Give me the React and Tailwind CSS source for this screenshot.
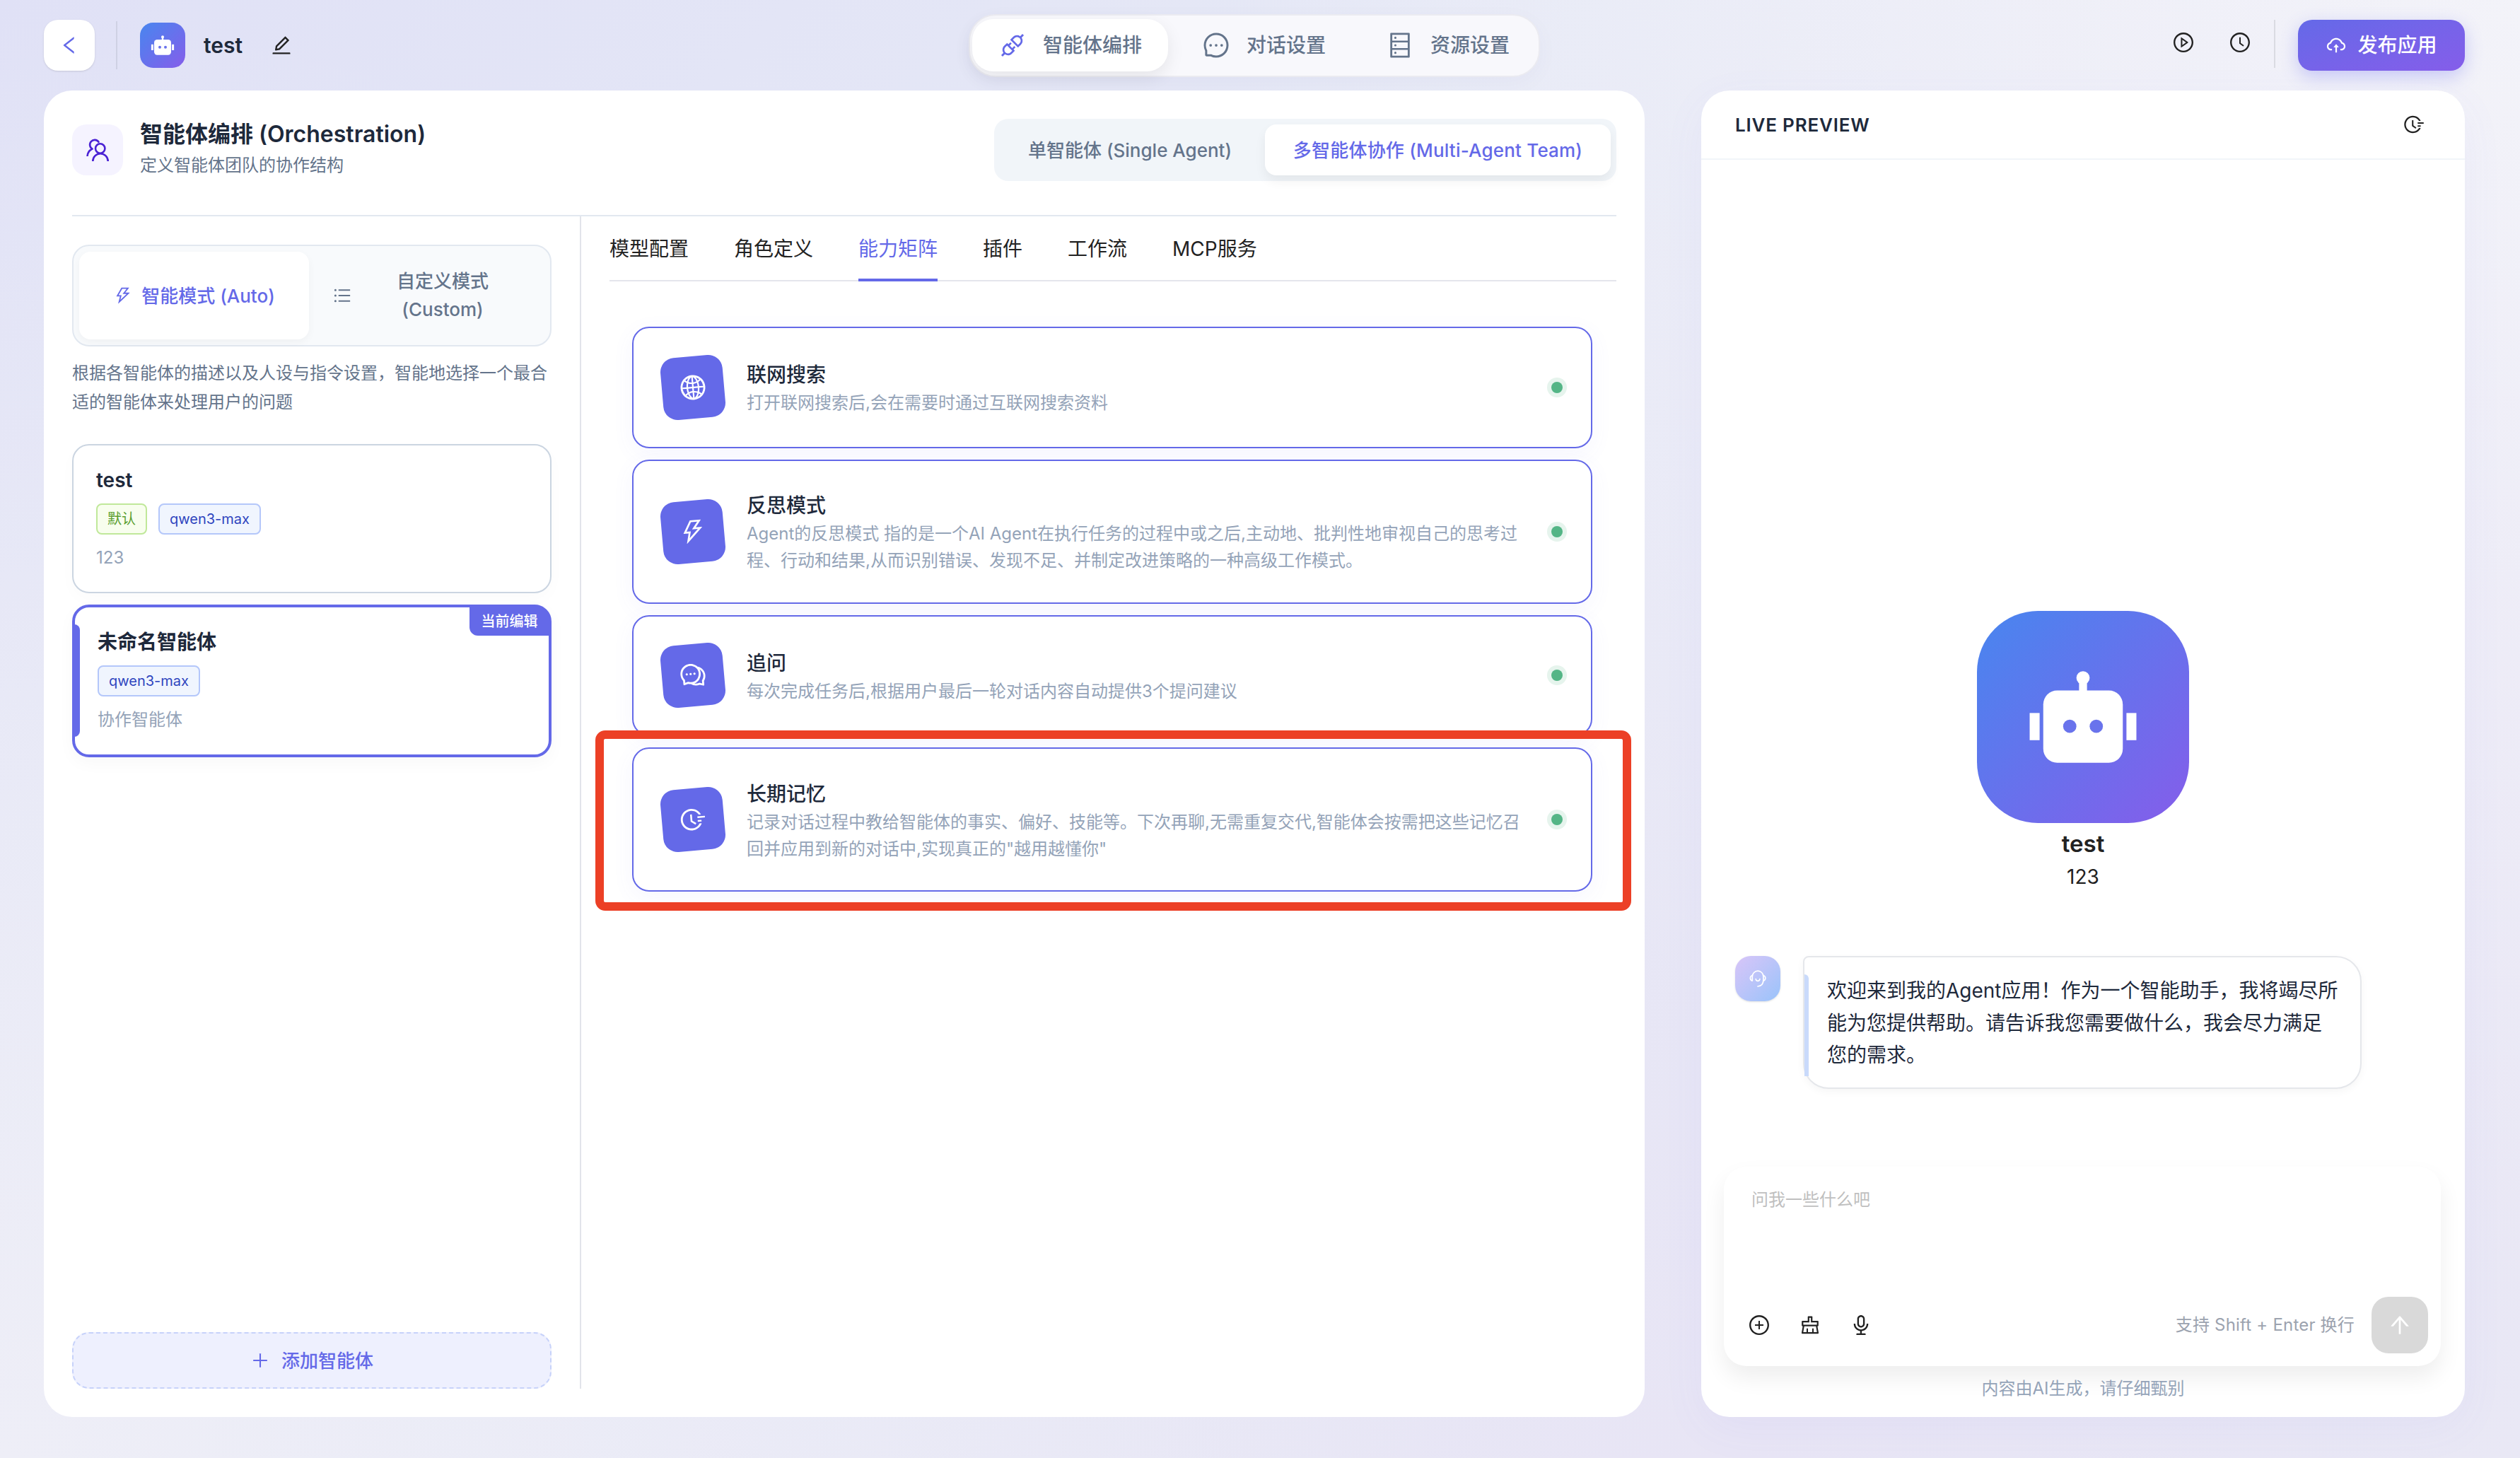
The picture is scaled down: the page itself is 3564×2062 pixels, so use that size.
import React, { useState } from 'react';
import clsx from 'clsx';
import {
  AiOutlineLeft,
  AiOutlineEdit,
  AiOutlineApi,
  AiOutlineMessage,
  AiOutlineDatabase,
  AiOutlinePlayCircle,
  AiOutlineClockCircle,
  AiOutlineCloudUpload,
  AiOutlineFieldTime,
  AiOutlineThunderbolt,
  AiOutlineUnorderedList,
  AiOutlineGlobal,
  AiOutlineComment,
  AiOutlinePlusCircle,
  AiOutlineClear,
  AiOutlineAudio,
  AiOutlineArrowUp,
  AiOutlinePlus,
} from 'react-icons/ai';

const navItems = [
  { key: 'agent', label: '智能体编排', icon: AiOutlineApi },
  { key: 'chat', label: '对话设置', icon: AiOutlineMessage },
  { key: 'resource', label: '资源设置', icon: AiOutlineDatabase },
];

const tabs = ['模型配置', '角色定义', '能力矩阵', '插件', '工作流', 'MCP服务'];

const abilities = [
  {
    title: '联网搜索',
    icon: AiOutlineGlobal,
    lines: ['打开联网搜索后,会在需要时通过互联网搜索资料'],
  },
  {
    title: '反思模式',
    icon: AiOutlineThunderbolt,
    lines: [
      'Agent的反思模式 指的是一个AI Agent在执行任务的过程中或之后,主动地、批判性地审视自己的思考过',
      '程、行动和结果,从而识别错误、发现不足、并制定改进策略的一种高级工作模式。',
    ],
  },
  {
    title: '追问',
    icon: AiOutlineComment,
    lines: ['每次完成任务后,根据用户最后一轮对话内容自动提供3个提问建议'],
  },
  {
    title: '长期记忆',
    icon: AiOutlineFieldTime,
    highlighted: true,
    lines: [
      '记录对话过程中教给智能体的事实、偏好、技能等。下次再聊,无需重复交代,智能体会按需把这些记忆召',
      '回并应用到新的对话中,实现真正的"越用越懂你"',
    ],
  },
];

const RobotLogo = ({ className, id }) => (
  <svg viewBox="0 0 32 32" className={className}>
    <defs>
      <linearGradient id={id} x1="0" y1="0" x2="1" y2="1">
        <stop offset="0" stopColor="#4886ef" />
        <stop offset="1" stopColor="#855dea" />
      </linearGradient>
    </defs>
    <rect width="32" height="32" rx="9.2" fill={`url(#${id})`} />
    <g fill="#fff">
      <circle cx="16" cy="10.1" r="1" />
      <rect x="15.4" y="10.2" width="1.2" height="2.2" />
      <rect x="10" y="12" width="12" height="10.9" rx="2.1" />
      <rect x="7.95" y="15.4" width="1.5" height="4.1" />
      <rect x="22.55" y="15.4" width="1.5" height="4.1" />
    </g>
    <circle cx="14" cy="17.4" r="1" fill="#6973ec" />
    <circle cx="18" cy="17.4" r="1" fill="#6973ec" />
  </svg>
);

const TeamIcon = ({ className }) => (
  <svg viewBox="4 4 72 72" className={className} fill="none" stroke="#4a22d4" strokeWidth="2.6">
    <circle cx="43.7" cy="38" r="6.7" />
    <path d="M33.300 56a10.700 10.700 0 0 1 21.400 0" />
    <path d="M41.500 28.800A6.800 6.800 0 1 0 32.600 38.600" strokeLinecap="round" />
    <path d="M32.300 38.700C28.500 40.600 25.800 44 25.500 49" />
  </svg>
);

const SupportIcon = ({ className }) => (
  <svg viewBox="4 6 64 64" className={className} fill="none" stroke="#fff" strokeWidth="1.7">
    <path d="M28.300 41V35a7.800 7.800 0 0 1 15.600 0v5c0 5-3 8.500-8 9" strokeLinecap="round" />
    <path d="M28.300 33.500a4 4 0 0 0 0 7.700M43.900 33.500a4 4 0 0 1 0 7.700" />
    <path d="M33.200 38.700c.5 3.500 5.200 3.500 5.700 0" strokeLinecap="round" />
  </svg>
);

const Tag = ({ children, green }) => (
  <span
    className={clsx(
      'flex h-11 items-center rounded-lg border-2 px-3.5 text-[20px] leading-none',
      green ? 'border-[#c0e89a] bg-[#f8feee] text-[#5a9e2e]' : 'border-[#b4c7fa] bg-[#f0f5fe] text-[#2f45be]'
    )}
  >
    {children}
  </span>
);

const TopBar = () => {
  const [active, setActive] = useState('agent');

  return (
    <header className="grid h-32 grid-cols-[1fr_auto_1fr] items-center pr-[78px] pl-[62px]">
      <div className="flex items-center">
        <button className="flex size-[72px] items-center justify-center rounded-[20px] bg-white text-[#6469e8] shadow-sm">
          <AiOutlineLeft size={32} />
        </button>
        <div className="ml-[30px] h-[68px] w-0.5 bg-[#cfd1e4]" />
        <RobotLogo id="logo-small" className="ml-8 size-16" />
        <span className="ml-[26px] text-[30px] font-semibold text-[#1e293b]">test</span>
        <AiOutlineEdit size={32} className="ml-[39px] text-[#222]" />
      </div>

      <nav className="flex h-[89px] w-[808px] items-center gap-[11px] rounded-[38px] border-2 border-[#ebebf1] bg-[#f8f8fc] px-[3px] shadow-[0_8px_32px_rgba(31,38,135,0.03)]">
        {navItems.map(({ key, label, icon: Icon }) => (
          <button
            key={key}
            onClick={() => setActive(key)}
            className={clsx(
              'flex h-[74px] shrink-0 items-center gap-[23px] rounded-[30px] px-[37px] text-[28px] font-medium whitespace-nowrap text-[#64748b]',
              active === key && 'bg-white shadow-[0_8px_24px_rgba(0,0,0,0.08)]'
            )}
          >
            <Icon size={40} className={active === key ? 'text-[#6469e8]' : ''} />
            {label}
          </button>
        ))}
      </nav>

      <div className="flex items-center justify-end text-[#222]">
        <AiOutlinePlayCircle size={32} className="mb-2" />
        <AiOutlineClockCircle size={32} className="mb-2 ml-12" />
        <div className="mb-1 ml-8 h-[68px] w-0.5 bg-[#dadbe2]" />
        <button className="ml-8 flex h-[72px] w-[236px] items-center justify-center gap-[15px] rounded-[20px] bg-linear-to-br from-[#6469e8] to-[#855dea] text-[28px] font-medium text-white shadow-[0_8px_24px_rgba(99,102,241,0.3)]">
          <AiOutlineCloudUpload size={30} />
          发布应用
        </button>
      </div>
    </header>
  );
};

const AgentSidebar = () => (
  <aside className="flex w-[720px] shrink-0 flex-col border-r-2 border-[#e2e4ea] pt-10 pr-10">
    <div className="flex h-36 rounded-3xl border-2 border-[#e2e8f0] bg-[#f8fafc] p-2 text-[26px] font-medium">
      <div className="flex w-[325px] items-center justify-center gap-3 rounded-2xl bg-white text-[#6469e8] shadow-[0_4px_12px_rgba(0,0,0,0.04)]">
        <AiOutlineThunderbolt size={28} />
        智能模式 (Auto)
      </div>
      <div className="flex flex-1 items-center pl-[33px] text-[#64748b]">
        <AiOutlineUnorderedList size={28} />
        <span className="flex-1 pr-4 text-center leading-10">
          自定义模式
          <br />
          (Custom)
        </span>
      </div>
    </div>

    <p className="mt-[17px] text-[24px] leading-[41px] whitespace-nowrap text-[#64748b]">
      根据各智能体的描述以及人设与指令设置，智能地选择一个最合
      <br />
      适的智能体来处理用户的问题
    </p>

    <div className="mt-[39px] h-[211px] rounded-3xl border-2 border-[#cbd5e1] px-8 pt-[28px] shadow-[0_8px_24px_rgba(0,0,0,0.02)]">
      <h3 className="text-[28px] leading-[42px] font-semibold text-[#1e293b]">test</h3>
      <div className="mt-3 flex gap-4">
        <Tag green>默认</Tag>
        <Tag>qwen3-max</Tag>
      </div>
      <p className="mt-[15px] text-[24px] leading-9 text-[#94a3b8]">123</p>
    </div>

    <div className="relative mt-4 h-[216px] rounded-3xl border-4 border-[#6469e8] px-8 pt-[28px] shadow-[0_8px_24px_rgba(0,0,0,0.03)]">
      <span className="absolute top-6 -left-1 h-[159px] w-[11px] rounded-r-lg bg-[#6469e8]" />
      <span className="absolute -top-px -right-px flex h-[41px] w-[113px] items-center justify-center rounded-tr-[20px] rounded-bl-xl bg-[#6469e8] text-[20px] font-medium text-white">
        当前编辑
      </span>
      <h3 className="text-[28px] leading-[42px] font-semibold text-[#1e293b]">未命名智能体</h3>
      <div className="mt-3 flex">
        <Tag>qwen3-max</Tag>
      </div>
      <p className="mt-[15px] text-[24px] leading-9 text-[#94a3b8]">协作智能体</p>
    </div>

    <button className="mt-auto flex h-20 items-center justify-center gap-4 rounded-3xl border-2 border-dashed border-[#c7d2fa] bg-[#eef0fe] text-[26px] font-medium text-[#6469e8]">
      <AiOutlinePlus size={28} />
      添加智能体
    </button>
  </aside>
);

const AbilityCard = ({ title, icon: Icon, lines, highlighted }) => (
  <div
    className={clsx(
      'relative flex items-center rounded-3xl border-2 border-[#6469e8] bg-white px-10 shadow-[0_8px_32px_rgba(99,102,241,0.06)]',
      lines.length > 1 ? 'h-[204px]' : 'h-[171.6px]'
    )}
  >
    <div className="flex size-[88px] -rotate-5 items-center justify-center rounded-[20px] bg-[#6469e8] text-white">
      <Icon size={40} />
    </div>
    <div className="ml-8 flex-1 pt-[3px]">
      <h3 className="text-[28px] leading-[42px] font-medium text-[#1e293b]">{title}</h3>
      {lines.map((line) => (
        <p key={line} className="text-[24px] leading-[38px] whitespace-nowrap text-[#94a3b8]">
          {line}
        </p>
      ))}
    </div>
    <span className="size-4 rounded-full bg-[#54b586] ring-6 ring-[#e6f4ed]" />
    {highlighted && (
      <span className="pointer-events-none absolute -top-[26px] -right-[57px] -bottom-[29px] -left-[54px] rounded-[14px] border-12 border-[#ec4026]" />
    )}
  </div>
);

const Workspace = () => {
  const [activeTab, setActiveTab] = useState('能力矩阵');

  return (
    <main className="flex w-[2264px] flex-col rounded-[40px] bg-white px-10 pb-10">
      <div className="flex h-[178px] shrink-0 items-start justify-between border-b-2 border-[#e2e8f0] pt-10">
        <div className="flex">
          <div className="mt-2 flex size-[72px] items-center justify-center rounded-[20px] bg-[#f5f3ff]">
            <TeamIcon className="size-[72px]" />
          </div>
          <div className="ml-6 whitespace-nowrap">
            <h1 className="text-[32px] leading-[44px] font-semibold text-[#1e293b]">智能体编排 (Orchestration)</h1>
            <p className="mt-1 text-[24px] leading-9 text-[#64748b]">定义智能体团队的协作结构</p>
          </div>
        </div>
        <div className="flex h-[88px] w-[880px] items-center justify-between rounded-[20px] bg-[#f1f5f9] p-2 text-[26px] font-medium whitespace-nowrap">
          <span className="px-[40px] text-[#64748b]">单智能体 (Single Agent)</span>
          <span className="flex h-[72px] w-[489px] items-center justify-center rounded-2xl bg-white tracking-[0.2px] text-[#6469e8] shadow-[0_8px_16px_rgba(0,0,0,0.06)]">
            多智能体协作 (Multi-Agent Team)
          </span>
        </div>
      </div>

      <div className="flex flex-1">
        <AgentSidebar />
        <section className="flex-1 pl-10">
          <div className="flex h-[92px] gap-16 border-b-2 border-[#e4e5ec] text-[28px]">
            {tabs.map((tab) => (
              <button
                key={tab}
                onClick={() => setActiveTab(tab)}
                className={clsx(
                  '-mb-0.5 border-b-4 pt-1 whitespace-nowrap',
                  activeTab === tab ? 'border-[#6469e8] text-[#6469e8]' : 'border-transparent text-[#222]'
                )}
              >
                {tab}
              </button>
            ))}
          </div>
          <div className="flex flex-col gap-4 pt-16 pr-[34px] pl-8">
            {abilities.map((item) => (
              <AbilityCard key={item.title} {...item} />
            ))}
          </div>
        </section>
      </div>
    </main>
  );
};

const LivePreview = () => (
  <section className="flex w-[1080px] flex-col rounded-[40px] bg-white shadow-[0_16px_64px_rgba(99,102,241,0.05)]">
    <div className="flex h-[98px] shrink-0 items-center justify-between border-b-2 border-[#f1f5f9] pr-14 pl-12">
      <h2 className="text-[26px] font-semibold tracking-[0.8px] text-[#1e293b]">LIVE PREVIEW</h2>
      <AiOutlineFieldTime size={32} className="text-[#222]" />
    </div>

    <div className="flex flex-col items-center pt-[638px] text-[#222]">
      <RobotLogo id="logo-large" className="size-[300px]" />
      <h3 className="mt-1 text-[33px] leading-[50px] font-semibold">test</h3>
      <p className="text-[28px] leading-[45px]">123</p>
    </div>

    <div className="mt-[89px] flex px-12">
      <div className="flex size-16 items-center justify-center rounded-[22px] bg-linear-to-br from-[#d8c5f8] to-[#99c3fa] shadow-sm">
        <SupportIcon className="size-16" />
      </div>
      <div className="relative ml-8 h-[188px] w-[790px] rounded-[36px] rounded-tl-lg border-2 border-[#e5e7eb] pt-[25px] pl-8 shadow-[0_4px_12px_rgba(0,0,0,0.04)]">
        <span className="absolute top-6 left-0 h-36 w-1.5 rounded-tr-md bg-[#c9dafb]" />
        <p className="text-[28px] leading-[45.5px] whitespace-nowrap text-[#1e293b]">
          欢迎来到我的Agent应用！作为一个智能助手，我将竭尽所
          <br />
          能为您提供帮助。请告诉我您需要做什么，我会尽力满足
          <br />
          您的需求。
        </p>
      </div>
    </div>

    <div className="mx-8 mt-auto flex h-[282px] w-[1014px] flex-col justify-between rounded-4xl bg-white pt-[29px] pr-[18px] pb-[18px] pl-[39px] shadow-[0_16px_32px_rgba(0,0,0,0.07)]">
      <span className="text-[24px] leading-9 text-[#bfbfbf]">问我一些什么吧</span>
      <div className="flex items-center text-[#222]">
        <div className="-ml-[5px] flex gap-10">
          <AiOutlinePlusCircle size={32} />
          <AiOutlineClear size={32} />
          <AiOutlineAudio size={32} />
        </div>
        <span className="ml-auto text-[24px] tracking-[0.2px] text-[#9ca3af]">支持 Shift + Enter 换行</span>
        <button className="ml-6 flex size-20 items-center justify-center rounded-3xl bg-[#d9d9d9] text-white">
          <AiOutlineArrowUp size={36} />
        </button>
      </div>
    </div>
    <p className="mt-[14px] mb-[22px] text-center text-[24px] leading-9 text-[#94a3b8]">内容由AI生成，请仔细甄别</p>
  </section>
);

const App = () => {
  return (
    <div className="flex h-[2062px] w-[3564px] flex-col overflow-hidden bg-[radial-gradient(circle_at_100%_0%,#f3f3f9_0%,#f0f0f800_45%),radial-gradient(circle_at_0%_100%,#eeeef7_0%,#eeeef700_50%),linear-gradient(135deg,#e0e1f6_0%,#e6e9f6_40%,#e8e5f5_80%,#e9e8f5_100%)] font-[Inter,'Noto_Sans_CJK_SC',sans-serif]">
      <TopBar />
      <div className="flex h-[1876px] justify-between pr-[78px] pl-[62px]">
        <Workspace />
        <LivePreview />
      </div>
    </div>
  );
};

export default App;
